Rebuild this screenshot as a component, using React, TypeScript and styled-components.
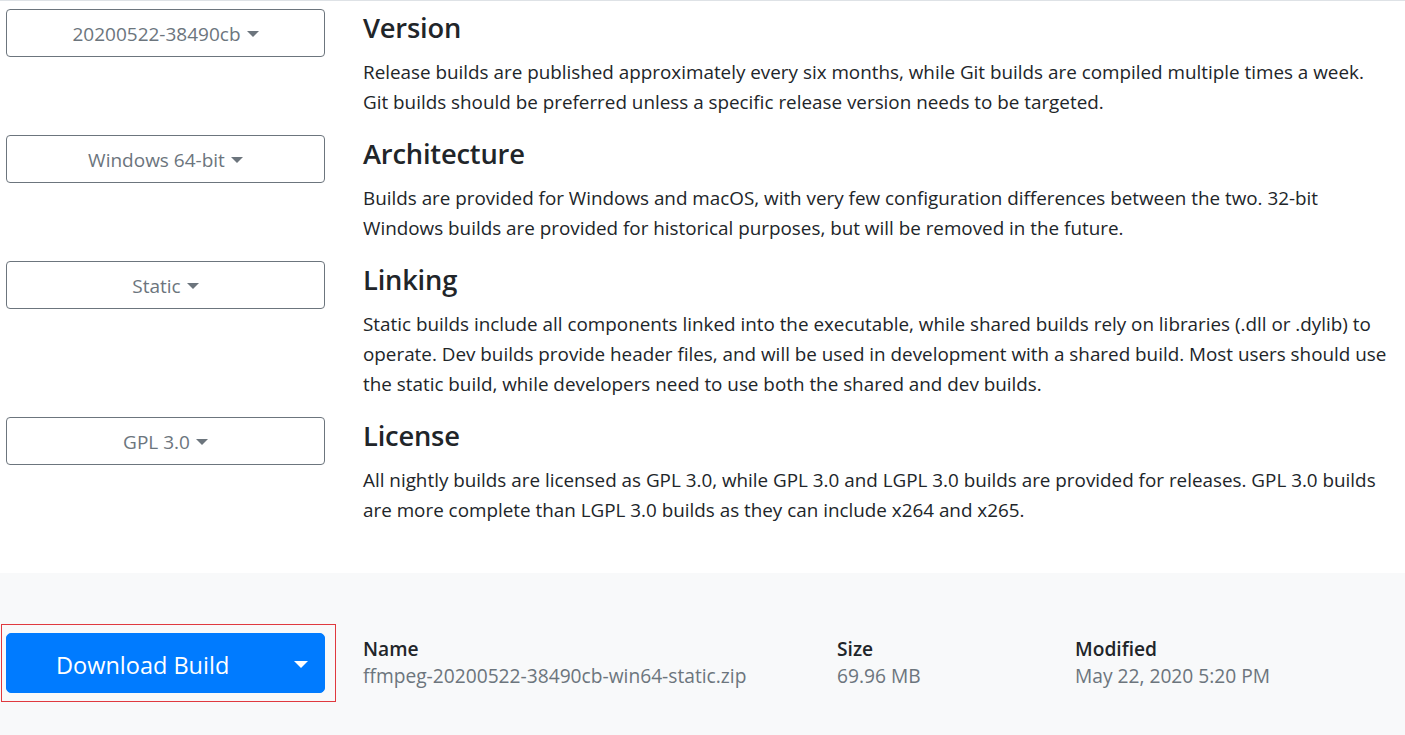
import React from "react";
import styled, { createGlobalStyle } from "styled-components";

const GlobalStyle = createGlobalStyle`
  html, body {
    margin: 0;
    padding: 0;
    background: #ffffff;
  }
  body {
    font-family: "Open Sans", "Noto Sans", sans-serif;
    color: #212529;
    -webkit-font-smoothing: antialiased;
  }
  * { box-sizing: border-box; }
`;

const Page = styled.div`
  border-top: 1px solid #dee2e6;
  min-height: 735px;
  display: flex;
  flex-direction: column;
`;

const Options = styled.section`
  padding: 8px 0 30px 0;
  display: flex;
  flex-direction: column;
`;

const OptionRow = styled.div`
  display: flex;
  padding-bottom: 18px;
`;

const ButtonCol = styled.div`
  width: 363px;
  flex-shrink: 0;
  padding-left: 6px;
`;

const SelectButton = styled.button`
  width: 319px;
  height: 48px;
  border: 1px solid #6c757d;
  border-radius: 4px;
  background: transparent;
  color: #6c757d;
  font-family: inherit;
  font-size: 19px;
  display: flex;
  align-items: center;
  justify-content: center;
  padding: 2px 0 0 0;
  cursor: pointer;
`;

const Caret = styled.span<{ $size: number; $color: string }>`
  display: inline-block;
  width: 0;
  height: 0;
  margin-left: ${(p) => Math.round(p.$size * 0.3)}px;
  border-top: ${(p) => p.$size * 0.3}px solid ${(p) => p.$color};
  border-left: ${(p) => p.$size * 0.3}px solid transparent;
  border-right: ${(p) => p.$size * 0.3}px solid transparent;
`;

const TextCol = styled.div`
  flex: 1;
  min-width: 0;
`;

const Heading = styled.h3`
  margin: 0 0 10px 0;
  font-size: 27.3px;
  line-height: 38px;
  font-weight: 600;
  color: #212529;
  letter-spacing: -0.2px;
`;

const Paragraph = styled.p`
  margin: 0;
  font-size: 18.85px;
  line-height: 30px;
  color: #212529;
  white-space: nowrap;
`;

const DownloadSection = styled.section`
  flex: 1;
  background: #f8f9fa;
  padding-top: 51px;
  display: flex;
  align-items: flex-start;
`;

const HighlightBox = styled.div`
  margin-left: 1px;
  width: 335px;
  padding: 8px 10px 8px 4px;
  border: 1px solid #e0393e;
`;

const DownloadButton = styled.button`
  width: 319px;
  height: 60px;
  border: 1px solid #007bff;
  border-radius: 5px;
  background: #007bff;
  color: #ffffff;
  font-family: inherit;
  font-size: 23.5px;
  display: flex;
  align-items: center;
  justify-content: space-between;
  padding: 3px 16px 0 49px;
  cursor: pointer;
`;

const InfoGrid = styled.div`
  margin-left: 27px;
  margin-top: 11px;
  display: grid;
  grid-template-columns: 474px 238px auto;
`;

const InfoItem = styled.div`
  display: flex;
  flex-direction: column;
`;

const InfoLabel = styled.div`
  font-size: 19.2px;
  font-weight: 600;
  line-height: 27px;
  color: #212529;
`;

const InfoValue = styled.div`
  font-size: 19.2px;
  line-height: 27px;
  color: #6c757d;
`;

type Option = {
  value: string;
  title: string;
  lines: string[];
};

const options: Option[] = [
  {
    value: "20200522-38490cb",
    title: "Version",
    lines: [
      "Release builds are published approximately every six months, while Git builds are compiled multiple times a week.",
      "Git builds should be preferred unless a specific release version needs to be targeted.",
    ],
  },
  {
    value: "Windows 64-bit",
    title: "Architecture",
    lines: [
      "Builds are provided for Windows and macOS, with very few configuration differences between the two. 32-bit",
      "Windows builds are provided for historical purposes, but will be removed in the future.",
    ],
  },
  {
    value: "Static",
    title: "Linking",
    lines: [
      "Static builds include all components linked into the executable, while shared builds rely on libraries (.dll or .dylib) to",
      "operate. Dev builds provide header files, and will be used in development with a shared build. Most users should use",
      "the static build, while developers need to use both the shared and dev builds.",
    ],
  },
  {
    value: "GPL 3.0",
    title: "License",
    lines: [
      "All nightly builds are licensed as GPL 3.0, while GPL 3.0 and LGPL 3.0 builds are provided for releases. GPL 3.0 builds",
      "are more complete than LGPL 3.0 builds as they can include x264 and x265.",
    ],
  },
];

const info = [
  { label: "Name", value: "ffmpeg-20200522-38490cb-win64-static.zip" },
  { label: "Size", value: "69.96 MB" },
  { label: "Modified", value: "May 22, 2020 5:20 PM" },
];

export default function App() {
  return (
    <>
      <GlobalStyle />
      <Page>
        <Options>
          {options.map((o) => (
            <OptionRow key={o.title}>
              <ButtonCol>
                <SelectButton>
                  {o.value}
                  <Caret $size={20} $color="#6c757d" />
                </SelectButton>
              </ButtonCol>
              <TextCol>
                <Heading>{o.title}</Heading>
                <Paragraph>
                  {o.lines.map((l, i) => (
                    <React.Fragment key={i}>
                      {l}
                      {i < o.lines.length - 1 && <br />}
                    </React.Fragment>
                  ))}
                </Paragraph>
              </TextCol>
            </OptionRow>
          ))}
        </Options>
        <DownloadSection>
          <HighlightBox>
            <DownloadButton>
              <span>Download Build</span>
              <Caret $size={24} $color="#ffffff" />
            </DownloadButton>
          </HighlightBox>
          <InfoGrid>
            {info.map((it) => (
              <InfoItem key={it.label}>
                <InfoLabel>{it.label}</InfoLabel>
                <InfoValue>{it.value}</InfoValue>
              </InfoItem>
            ))}
          </InfoGrid>
        </DownloadSection>
      </Page>
    </>
  );
}
